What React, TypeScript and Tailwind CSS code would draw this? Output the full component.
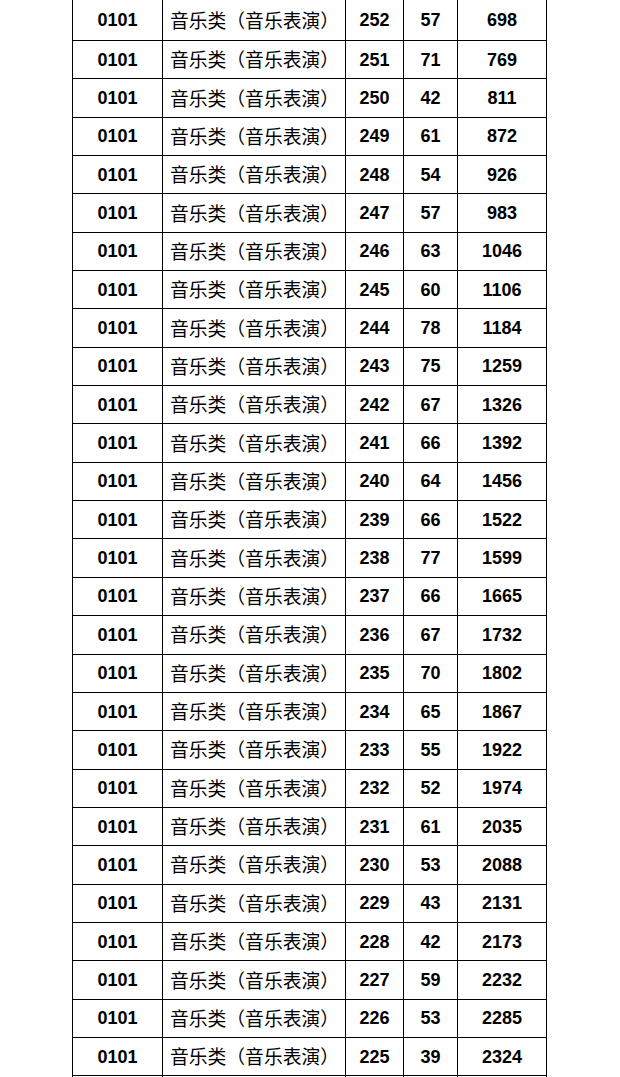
import React from "react";

const rows: [number, number, number][] = [
  [252, 57, 698],
  [251, 71, 769],
  [250, 42, 811],
  [249, 61, 872],
  [248, 54, 926],
  [247, 57, 983],
  [246, 63, 1046],
  [245, 60, 1106],
  [244, 78, 1184],
  [243, 75, 1259],
  [242, 67, 1326],
  [241, 66, 1392],
  [240, 64, 1456],
  [239, 66, 1522],
  [238, 77, 1599],
  [237, 66, 1665],
  [236, 67, 1732],
  [235, 70, 1802],
  [234, 65, 1867],
  [233, 55, 1922],
  [232, 52, 1974],
  [231, 61, 2035],
  [230, 53, 2088],
  [229, 43, 2131],
  [228, 42, 2173],
  [227, 59, 2232],
  [226, 53, 2285],
  [225, 39, 2324],
];

const num = "font-['Liberation_Sans',Arial,sans-serif] font-bold text-[18px] text-black";
const cjk = "font-['Noto_Sans_CJK_SC','Noto_Sans',sans-serif] text-[18.8px] text-black";

function Row({ r, first }: { r: [number, number, number]; first: boolean }) {
  return (
    <div
      className={`grid grid-cols-[90px_183px_58px_54px_90px] border-b border-black ${
        first ? "h-[41px]" : "h-[38.35px]"
      }`}
    >
      <div className={`border-l border-black flex items-center justify-center pt-[1px] ${num}`}>0101</div>
      <div className={`border-l border-black flex items-center pl-[7px] ${cjk}`}>
        <span className="leading-none whitespace-nowrap">音乐类（音乐表演）</span>
      </div>
      <div className={`border-l border-black flex items-center justify-center pt-[1px] ${num}`}>{r[0]}</div>
      <div className={`border-l border-black flex items-center justify-center pt-[1px] ${num}`}>{r[1]}</div>
      <div className={`border-l border-r border-black flex items-center justify-center pt-[1px] ${num}`}>{r[2]}</div>
    </div>
  );
}

export default function App() {
  return (
    <div className="w-[620px] h-[1077px] overflow-hidden bg-white">
      <div className="ml-[72px] w-[475px] flex flex-col">
        {rows.map((r, i) => (
          <Row key={i} r={r} first={i === 0} />
        ))}
        <div className="grid grid-cols-[90px_183px_58px_54px_90px] h-[10px]">
          <div className="border-l border-black" />
          <div className="border-l border-black" />
          <div className="border-l border-black" />
          <div className="border-l border-black" />
          <div className="border-l border-r border-black" />
        </div>
      </div>
    </div>
  );
}
